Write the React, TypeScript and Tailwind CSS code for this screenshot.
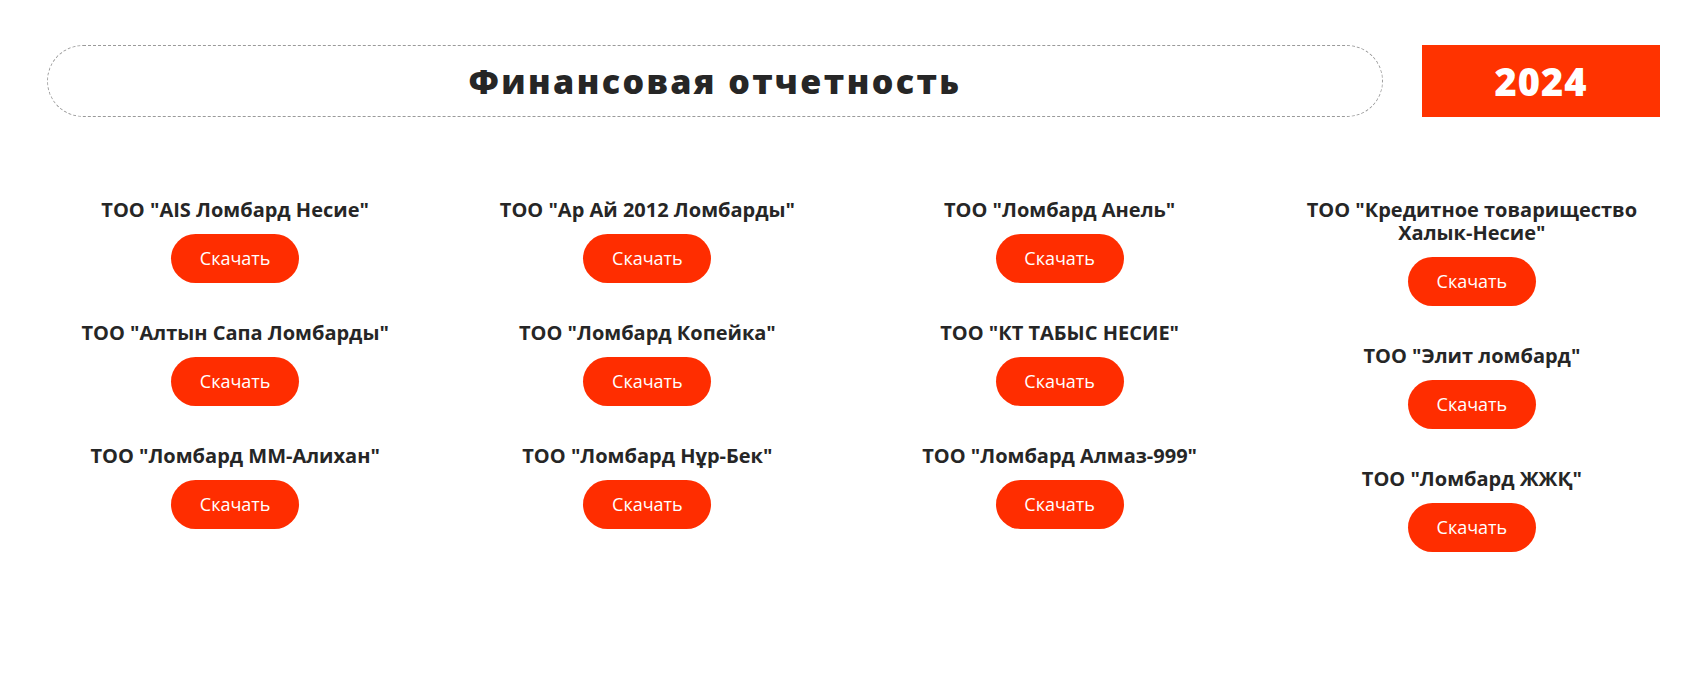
const columns: string[][] = [
  ['ТОО "AIS Ломбард Несие"', 'ТОО "Алтын Сапа Ломбарды"', 'ТОО "Ломбард ММ-Алихан"'],
  ['ТОО "Ар Ай 2012 Ломбарды"', 'ТОО "Ломбард Копейка"', 'ТОО "Ломбард Нұр-Бек"'],
  ['ТОО "Ломбард Анель"', 'ТОО "КТ ТАБЫС НЕСИЕ"', 'ТОО "Ломбард Алмаз-999"'],
  [
    'ТОО "Кредитное товарищество Халык-Несие"',
    'ТОО "Элит ломбард"',
    'ТОО "Ломбард ЖЖҚ"',
  ],
];

function ReportItem({ name }: { name: string }) {
  return (
    <div className="mb-[38px] flex flex-col items-center">
      <p className="mb-[13px] max-w-[340px] text-center text-[20px] font-bold leading-[23px] text-[#262626]">
        {name}
      </p>
      <a
        href="#"
        className="flex h-[49px] w-[128px] items-center justify-center rounded-full bg-[#ff2d00] text-[18px] text-white"
      >
        Скачать
      </a>
    </div>
  );
}

export default function App() {
  return (
    <div className="min-h-screen bg-white font-['Open_Sans',sans-serif]">
      {/* header */}
      <div className="flex items-center gap-[39px] pl-[47px] pr-[29px] pt-[45px]">
        <div className="flex h-[72px] flex-1 items-center justify-center rounded-full border border-dashed border-[#9a9a9a]">
          <h1 className="text-[34px] font-extrabold tracking-[2.4px] text-[#262626]">
            Финансовая отчетность
          </h1>
        </div>
        <div className="flex h-[72px] w-[238px] items-center justify-center bg-[#ff3300]">
          <span className="text-[38px] font-extrabold tracking-[1px] text-white">2024</span>
        </div>
      </div>

      {/* reports */}
      <div className="ml-[29px] mt-[81px] grid w-[1649px] grid-cols-4">
        {columns.map((col, i) => (
          <div key={i} className="flex flex-col">
            {col.map((name) => (
              <ReportItem key={name} name={name} />
            ))}
          </div>
        ))}
      </div>
    </div>
  );
}
